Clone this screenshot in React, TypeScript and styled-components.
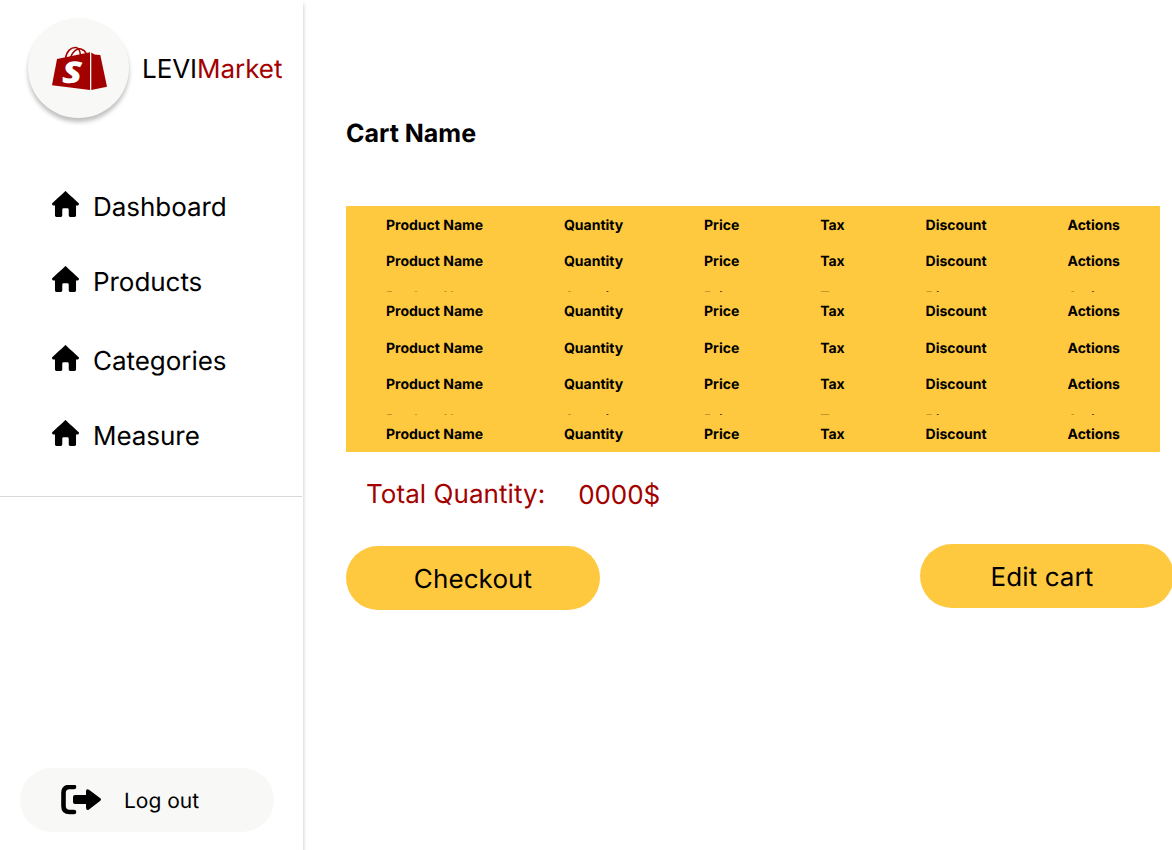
import React from "react";
import styled, { createGlobalStyle } from "styled-components";

const GlobalStyle = createGlobalStyle`
  * { box-sizing: border-box; font-optical-sizing: none; }
  body { margin: 0; background: #fff; overflow: hidden; text-rendering: geometricPrecision; }
`;

const Page = styled.div`
  display: flex;
  width: 1172px;
  height: 850px;
  overflow: hidden;
  background: #fff;
  color: #000;
  font-family: Inter, sans-serif;
  font-size: 26px;
  line-height: 31px;
  font-weight: 400;
`;

const Sidebar = styled.aside`
  display: flex;
  flex-direction: column;
  flex: none;
  width: 303px;
  box-shadow: 0 4px 4px rgba(0, 0, 0, 0.25);
`;

const Brand = styled.header`
  display: flex;
  align-items: center;
  gap: 13px;
  padding: 18px 0 0 28px;
`;

const LogoDisc = styled.div`
  width: 101px;
  height: 100px;
  border-radius: 50%;
  background: #f8f8f6;
  box-shadow: 0 4px 4px rgba(0, 0, 0, 0.25);
`;

const BrandName = styled.div`
  padding-top: 2px;
  white-space: nowrap;
  letter-spacing: -0.05px;
`;

const Accent = styled.span`
  color: #a30000;
`;

const Nav = styled.nav`
  display: flex;
  flex-direction: column;
  width: 302px;
  height: 379px;
  padding: 73px 0 0 52px;
  border-bottom: 1px solid #d9d9d9;
`;

const NavItem = styled.a<{ $gap: number }>`
  display: flex;
  align-items: flex-start;
  gap: 14px;
  height: 31px;
  margin-bottom: ${(p) => p.$gap}px;
`;

const NavLabel = styled.span`
  padding-top: 1px;
  letter-spacing: -0.05px;
`;

const LogoutButton = styled.button`
  display: flex;
  align-items: center;
  gap: 23px;
  width: 254px;
  height: 64px;
  margin: auto 0 18px 20px;
  padding: 0 0 0 41px;
  border: 0;
  border-radius: 32px;
  background: #f8f8f6;
  color: #000;
  font: 400 21px/25px Inter, sans-serif;
  text-rendering: geometricPrecision;
`;

const LogoutLabel = styled.span`
  padding-top: 2px;
`;

const Main = styled.main`
  flex: none;
  width: 869px;
  padding: 119px 0 0 43px;
`;

const Title = styled.h1`
  margin: 0 0 56px;
  font-size: 25px;
  line-height: 31px;
  font-weight: 700;
`;

const Table = styled.div`
  width: 814px;
  background: #ffc93f;
`;

const Row = styled.div<{ $height: number }>`
  display: flex;
  justify-content: space-between;
  height: ${(p) => p.$height}px;
  padding: 11px 40px 0;
  overflow: hidden;
  font-size: 14px;
  line-height: 17px;
  font-weight: 700;
`;

const Totals = styled.div`
  display: flex;
  gap: 33px;
  padding: 27px 0 0 20px;
  height: 92px;
  color: #a30000;
  letter-spacing: 0.06px;
`;

const Amount = styled.span`
  padding-top: 1px;
  letter-spacing: -0.1px;
`;

const Actions = styled.div`
  display: flex;
  justify-content: space-between;
  align-items: flex-start;
  width: 828px;
`;

const PillButton = styled.button<{ $drop?: number; $shift?: number }>`
  width: 254px;
  height: 64px;
  margin-top: ${(p) => p.$drop ?? 0}px;
  padding: 2px ${(p) => p.$shift ?? 0}px 0 0;
  border: 0;
  border-radius: 32px;
  background: #ffc93f;
  color: #000;
  font: 400 26px/31px Inter, sans-serif;
  letter-spacing: 0.1px;
  text-rendering: geometricPrecision;
`;

const BagLogo = () => (
  <svg width="101" height="100" viewBox="28 18 101 100">
    <g fill="none" stroke="#a30000" strokeWidth="1.5">
      <path d="M65.500 58.500C66.500 51 71 47.300 76 47.600C79 48 80 50.500 80.500 55" />
      <path d="M70.500 57.500C72.500 51.500 77 48 81 49C84 50 85.500 51.500 86.300 54" />
    </g>
    <path d="M57 59L90 52.300V90L52 85.300Z" fill="#a30000" />
    <path d="M91.300 52.600L94.500 54.600L100.300 55L107 86.800L91.300 90Z" fill="#a30000" />
    <text transform="translate(62 82.500) scale(1.22 1)" fill="#fff" fontFamily="Open Sans, sans-serif" fontSize="30" fontWeight="800" fontStyle="italic">S</text>
  </svg>
);

const HomeIcon = () => (
  <svg width="27" height="26" viewBox="2 3 20 18" preserveAspectRatio="none">
    <path d="M12 3s-6.186 5.340-9.643 8.232A1.040 1.040 0 0 0 2 12a1 1 0 0 0 1 1h1.200v7a1 1 0 0 0 1 1H8.600a1 1 0 0 0 1-1v-4q0-1 1-1h2.800q1 0 1 1v4a1 1 0 0 0 1 1h3.400a1 1 0 0 0 1-1v-7H21a1 1 0 0 0 1-1c0-.316-.154-.584-.383-.768C18.184 8.340 12 3 12 3z" />
  </svg>
);

const LogoutIcon = () => (
  <svg width="40" height="30" viewBox="61 785 40 30">
    <path d="M74 787H69.500Q63.500 787 63.500 793V806Q63.500 812 69.500 812H74" fill="none" stroke="#000" strokeWidth="4.600" strokeLinecap="round" />
    <path d="M75 795H86V791.500Q86 788 89 789.800L100 798Q102 799.500 100 801L89 809.400Q86 811 86 807.500V804H75Q73 804 73 802V797Q73 795 75 795Z" />
  </svg>
);

const navItems = [
  { label: "Dashboard", gap: 44 },
  { label: "Products", gap: 48 },
  { label: "Categories", gap: 44 },
  { label: "Measure", gap: 0 },
];

const columns = ["Product Name", "Quantity", "Price", "Tax", "Discount", "Actions"];
const rowHeights = [36, 36, 14, 37, 36, 36, 14, 37];

export default function App() {
  return (
    <Page>
      <GlobalStyle />
      <Sidebar>
        <Brand>
          <LogoDisc>
            <BagLogo />
          </LogoDisc>
          <BrandName>
            LEVI<Accent>Market</Accent>
          </BrandName>
        </Brand>
        <Nav>
          {navItems.map((item) => (
            <NavItem key={item.label} $gap={item.gap}>
              <HomeIcon />
              <NavLabel>{item.label}</NavLabel>
            </NavItem>
          ))}
        </Nav>
        <LogoutButton>
          <LogoutIcon />
          <LogoutLabel>Log out</LogoutLabel>
        </LogoutButton>
      </Sidebar>
      <Main>
        <Title>Cart Name</Title>
        <Table>
          {rowHeights.map((height, i) => (
            <Row key={i} $height={height}>
              {columns.map((column) => (
                <span key={column}>{column}</span>
              ))}
            </Row>
          ))}
        </Table>
        <Totals>
          <span>Total Quantity:</span>
          <Amount>0000$</Amount>
        </Totals>
        <Actions>
          <PillButton $drop={2}>Checkout</PillButton>
          <PillButton $shift={10}>Edit cart</PillButton>
        </Actions>
      </Main>
    </Page>
  );
}
